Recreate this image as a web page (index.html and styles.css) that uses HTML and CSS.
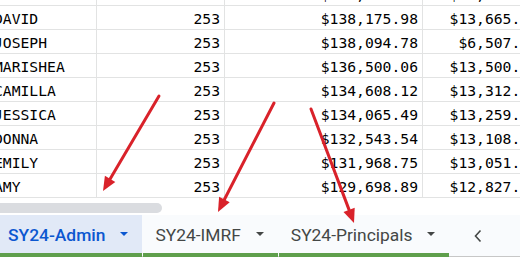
FILE: index.html
```html
<!DOCTYPE html>
<html>
<head>
<meta charset="utf-8">
<link rel="stylesheet" href="styles.css">
</head>
<body>
<div class="app">
  <div class="grid-view">
    <div class="grid">
      <div class="cell name">ANDREW</div><div class="cell num">253</div><div class="cell num">$138,512.34</div><div class="cell num">$13,712.34</div>
      <div class="cell name">DAVID</div><div class="cell num">253</div><div class="cell num">$138,175.98</div><div class="cell num">$13,665.41</div>
      <div class="cell name">JOSEPH</div><div class="cell num">253</div><div class="cell num">$138,094.78</div><div class="cell num">$6,507.22</div>
      <div class="cell name">MARISHEA</div><div class="cell num">253</div><div class="cell num">$136,500.06</div><div class="cell num">$13,500.10</div>
      <div class="cell name">CAMILLA</div><div class="cell num">253</div><div class="cell num">$134,608.12</div><div class="cell num">$13,312.18</div>
      <div class="cell name">JESSICA</div><div class="cell num">253</div><div class="cell num">$134,065.49</div><div class="cell num">$13,259.83</div>
      <div class="cell name">DONNA</div><div class="cell num">253</div><div class="cell num">$132,543.54</div><div class="cell num">$13,108.45</div>
      <div class="cell name">EMILY</div><div class="cell num">253</div><div class="cell num">$131,968.75</div><div class="cell num">$13,051.62</div>
      <div class="cell name">AMY</div><div class="cell num">253</div><div class="cell num">$129,698.89</div><div class="cell num">$12,827.25</div>
    </div>
  </div>
  <div class="hscroll"><div class="thumb"></div></div>
  <div class="tabbar">
    <div class="tab active"><span class="label">SY24-Admin</span><span class="caret"></span></div>
    <div class="tab"><span class="label">SY24-IMRF</span><span class="caret"></span></div>
    <div class="tab"><span class="label">SY24-Principals</span><span class="caret"></span></div>
    <div class="nav">
      <svg width="10" height="14" viewBox="0 0 10 14"><path d="M7.5 1.5 L2.5 7 L7.5 12.5" fill="none" stroke="#444746" stroke-width="1.6"/></svg>
    </div>
  </div>
  <svg class="arrows" width="520" height="272" viewBox="0 0 520 272">
    <g stroke="#d9222a" stroke-width="3" stroke-linecap="round" fill="none">
      <line x1="159" y1="96" x2="110.1" y2="178.9"/>
      <line x1="274" y1="103" x2="224.4" y2="199.5"/>
      <line x1="311" y1="109" x2="349.1" y2="209.9"/>
    </g>
    <g fill="#d9222a">
      <polygon points="103,191 115.3,181.9 104.9,175.8"/>
      <polygon points="218,212 229.7,202.2 219.1,196.8"/>
      <polygon points="354,223 354.7,207.8 343.5,212"/>
    </g>
  </svg>
</div>
</body>
</html>
```

FILE: styles.css
```css
* { box-sizing: border-box; }
html, body {
  margin: 0;
  padding: 0;
  background: #ffffff;
}
.app {
  position: relative;
  width: 520px;
  height: 272px;
  overflow: hidden;
  background: #ffffff;
}
.grid-view {
  height: 198px;
  overflow: hidden;
}
.grid {
  display: grid;
  grid-template-columns: 109px 128px 198px 120px;
  grid-auto-rows: 24px;
  width: 555px;
  margin-left: -12px;
  margin-top: -18px;
  font-family: "DejaVu Sans Mono", "Liberation Mono", monospace;
  font-size: 14.7px;
  color: #000000;
}
.cell {
  border-right: 1px solid #e2e3e3;
  border-bottom: 1px solid #e2e3e3;
  padding: 2px 4px 0 4px;
  line-height: 21px;
  white-space: nowrap;
  overflow: hidden;
}
.num { text-align: right; }
.name { text-align: left; padding-left: 6px; }

.hscroll {
  height: 17px;
  padding-top: 5px;
  background: #ffffff;
}
.thumb {
  width: 172px;
  height: 10px;
  margin-left: -10px;
  border-radius: 5px;
  background: #dadce0;
}

.tabbar {
  display: flex;
  align-items: stretch;
  height: 42px;
  background: #f9fbfd;
  border-bottom: 1px solid #c7c7c7;
  margin-left: -4px;
}
.tab {
  display: flex;
  align-items: center;
  padding: 0 14px 0 12px;
  margin-right: 1px;
  margin-bottom: -1px;
  border-bottom: 4px solid #5f9f4c;
  font-family: Roboto, "Noto Sans", sans-serif;
  font-size: 17.4px;
  color: #444746;
}
.tab .label { padding-top: 2px; }
.tab.active {
  background: #e1e9f7;
  color: #0b57d0;
  font-weight: 500;
}
.caret {
  width: 0;
  height: 0;
  margin-left: 15px;
  border-left: 4px solid transparent;
  border-right: 4px solid transparent;
  border-top: 4px solid #444746;
}
.tab.active .caret { border-top-color: #0b57d0; }
.nav {
  display: flex;
  align-items: center;
  padding-left: 23px;
}
.nav svg { display: block; }
.arrows {
  position: absolute;
  left: 0;
  top: 0;
  pointer-events: none;
}
```
